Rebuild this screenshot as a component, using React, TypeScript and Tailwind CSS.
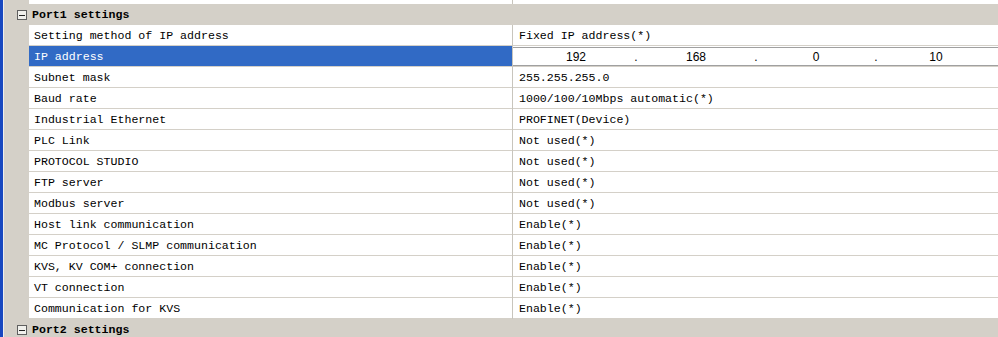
import React from "react";

const rows: [string, string][] = [
  ["Setting method of IP address", "Fixed IP address(*)"],
  ["IP address", "__IP__"],
  ["Subnet mask", "255.255.255.0"],
  ["Baud rate", "1000/100/10Mbps automatic(*)"],
  ["Industrial Ethernet", "PROFINET(Device)"],
  ["PLC Link", "Not used(*)"],
  ["PROTOCOL STUDIO", "Not used(*)"],
  ["FTP server", "Not used(*)"],
  ["Modbus server", "Not used(*)"],
  ["Host link communication", "Enable(*)"],
  ["MC Protocol / SLMP communication", "Enable(*)"],
  ["KVS, KV COM+ connection", "Enable(*)"],
  ["VT connection", "Enable(*)"],
  ["Communication for KVS", "Enable(*)"],
];

const mono = { fontFamily: '"Liberation Mono", "Courier New", monospace' };

function Header({ title }: { title: string }) {
  return (
    <div className="flex h-[21px] shrink-0 items-center bg-[#d4d0c8] pt-px">
      <div className="ml-[13px] flex h-[10px] w-[10px] items-center justify-center border border-[#5f5f5f] bg-[#f0f0ec]">
        <div className="h-px w-[6px] bg-[#222]" />
      </div>
      <span className="ml-[5px] text-[11.6px] font-bold text-black">{title}</span>
    </div>
  );
}

function IpInput() {
  const parts = ["192", "168", "0", "10"];
  return (
    <div className="flex h-full w-full items-center border-y border-[#a0a0a0] bg-white pl-[5px] pt-px" style={{ fontFamily: '"Liberation Sans", Arial, sans-serif' }}>
      {parts.map((p, i) => (
        <React.Fragment key={i}>
          <span className="w-[116px] shrink-0 text-center text-[12px] text-black">{p}</span>
          {i < 3 && <span className="w-[4px] shrink-0 text-center text-[12px] text-black">.</span>}
        </React.Fragment>
      ))}
    </div>
  );
}

export default function App() {
  return (
    <div className="flex h-[337px] w-[998px] overflow-hidden bg-white" style={mono}>
      <div className="w-[3px] shrink-0 bg-[#1747c0]" />
      <div className="w-px shrink-0 bg-[#eeeeee]" />
      <div className="flex min-w-0 flex-1 flex-col">
        <div className="flex h-[4px] shrink-0">
          <div className="w-[25px] shrink-0 bg-[#d4d0c8]" />
          <div className="w-[483px] shrink-0 bg-white" />
          <div className="w-px shrink-0 bg-[#c8c5bd]" />
          <div className="flex-1 bg-white" />
        </div>
        <Header title="Port1 settings" />
        {rows.map(([label, value], i) => {
          const selected = value === "__IP__";
          return (
            <div key={i} className="flex h-[21px] shrink-0">
              <div className="w-[25px] shrink-0 bg-[#d4d0c8]" />
              <div
                className={
                  selected
                    ? "flex w-[483px] shrink-0 items-center border-b border-[#d4d0c8] bg-[#316ac5] pl-[5px] pt-px text-[11.6px] text-white"
                    : "flex w-[483px] shrink-0 items-center border-b border-[#d4d0c8] bg-white pl-[5px] pt-px text-[11.6px] text-black"
                }
              >
                {label}
              </div>
              <div className="w-px shrink-0 bg-[#c8c5bd]" />
              <div className="flex flex-1 items-center border-b border-[#d4d0c8] pt-px text-[11.6px] text-black">
                {selected ? <IpInput /> : <span className="pl-[6px]">{value}</span>}
              </div>
            </div>
          );
        })}
        <Header title="Port2 settings" />
      </div>
    </div>
  );
}
